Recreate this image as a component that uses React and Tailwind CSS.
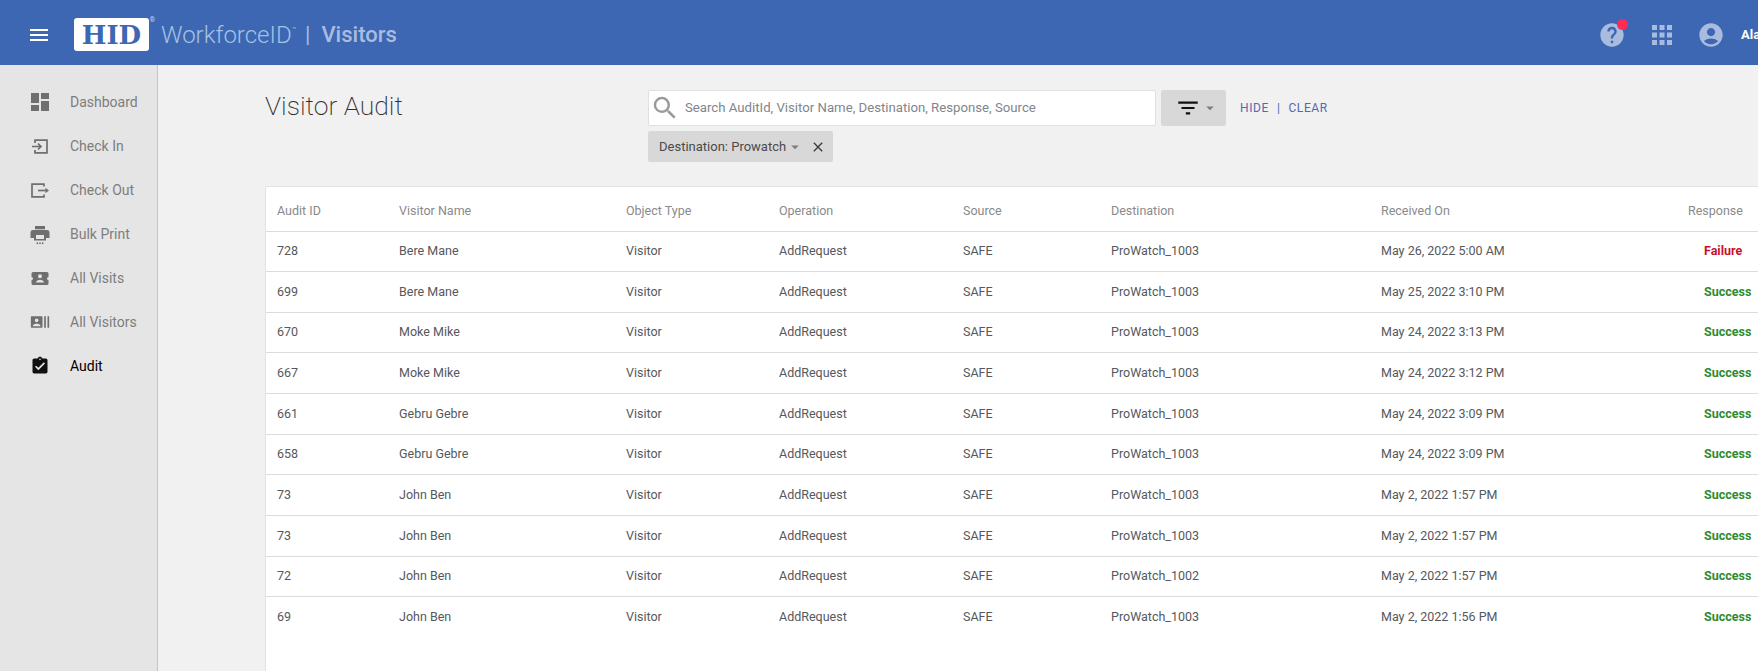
import { MdMenu, MdDashboard, MdRecentActors, MdAssignmentTurnedIn, MdHelp, MdApps, MdAccountCircle, MdFilterList, MdClose, MdArrowDropDown, MdSearch } from "react-icons/md";

function CheckInIcon({ className }) {
  return (
    <svg viewBox="0 0 24 24" className={className} fill="none" stroke="currentColor" strokeWidth="1.7">
      <path d="M4 12.500h9M10 9.500l3 3-3 3" />
      <path d="M7 9V6.200h12v12.600H7V16" />
    </svg>
  );
}

function CheckOutIcon({ className }) {
  return (
    <svg viewBox="0 0 24 24" className={className} fill="none" stroke="currentColor" strokeWidth="1.7">
      <path d="M16 8.500V6.200H4v12.600h12v-2.300" />
      <path d="M10 12.500h8" />
      <path d="M17.500 9.800l3.500 2.700-3.500 2.700z" fill="currentColor" stroke="none" />
    </svg>
  );
}

function PrintIcon({ className }) {
  return (
    <svg viewBox="0 0 24 24" className={className} fill="currentColor">
      <path d="M7 4h10v3.300H7z" />
      <path fillRule="evenodd" d="M5 8h14a2.500 2.500 0 0 1 2.500 2.500V16H18v2.500H6V16H2.500v-5.500A2.500 2.500 0 0 1 5 8zm3 5v4h8v-4z" />
      <rect x="8.500" y="20.500" width="1.600" height="1.600" />
      <rect x="11.200" y="20.500" width="1.600" height="1.600" />
      <rect x="13.900" y="20.500" width="1.600" height="1.600" />
    </svg>
  );
}

function VisitsIcon({ className }) {
  return (
    <svg viewBox="0 0 24 24" className={className} fill="currentColor">
      <path
        fillRule="evenodd"
        d="M5 6h14a1.500 1.500 0 0 1 1.500 1.500V11a1.500 1.500 0 0 0 0 3v3.500A1.500 1.500 0 0 1 19 19H5a1.500 1.500 0 0 1-1.500-1.500V14a1.500 1.500 0 0 0 0-3V7.500A1.500 1.500 0 0 1 5 6zm7 2.300a2 2 0 1 0 0 4 2 2 0 0 0 0-4zM8 16.500h8c0-1.700-2.700-2.700-4-2.700s-4 1-4 2.700z"
      />
    </svg>
  );
}

const navItems = [
  { label: "Dashboard", icon: MdDashboard, size: "ml-[28px] mr-[18px] h-[24px] w-[24px]" },
  { label: "Check In", icon: CheckInIcon, size: "ml-[28px] mr-[18px] h-[24px] w-[24px]" },
  { label: "Check Out", icon: CheckOutIcon, size: "ml-[28px] mr-[18px] h-[24px] w-[24px]" },
  { label: "Bulk Print", icon: PrintIcon, size: "ml-[28px] mr-[18px] h-[24px] w-[24px]" },
  { label: "All Visits", icon: VisitsIcon, size: "ml-[28px] mr-[18px] h-[24px] w-[24px]" },
  { label: "All Visitors", icon: MdRecentActors, size: "ml-[30px] mr-[20px] h-[20px] w-[20px]" },
  { label: "Audit", icon: MdAssignmentTurnedIn, size: "ml-[30px] mr-[20px] h-[20px] w-[20px]", active: true },
];

const rows = [
  ["728", "Bere Mane", "ProWatch_1003", "May 26, 2022 5:00 AM", "Failure"],
  ["699", "Bere Mane", "ProWatch_1003", "May 25, 2022 3:10 PM", "Success"],
  ["670", "Moke Mike", "ProWatch_1003", "May 24, 2022 3:13 PM", "Success"],
  ["667", "Moke Mike", "ProWatch_1003", "May 24, 2022 3:12 PM", "Success"],
  ["661", "Gebru Gebre", "ProWatch_1003", "May 24, 2022 3:09 PM", "Success"],
  ["658", "Gebru Gebre", "ProWatch_1003", "May 24, 2022 3:09 PM", "Success"],
  ["73", "John Ben", "ProWatch_1003", "May 2, 2022 1:57 PM", "Success"],
  ["73", "John Ben", "ProWatch_1003", "May 2, 2022 1:57 PM", "Success"],
  ["72", "John Ben", "ProWatch_1002", "May 2, 2022 1:57 PM", "Success"],
  ["69", "John Ben", "ProWatch_1003", "May 2, 2022 1:56 PM", "Success"],
];

const columns = [
  { label: "Audit ID", width: "w-[133px]" },
  { label: "Visitor Name", width: "w-[227px]" },
  { label: "Object Type", width: "w-[153px]" },
  { label: "Operation", width: "w-[184px]" },
  { label: "Source", width: "w-[148px]" },
  { label: "Destination", width: "w-[270px]" },
  { label: "Received On", width: "w-[307px]" },
  { label: "Response", width: "w-[150px]" },
];

export default function App() {
  return (
    <div className="h-screen w-screen overflow-hidden bg-[#f1f1f1] font-['Roboto',sans-serif]">
      <header className="flex h-[65px] items-center overflow-hidden bg-[#3d67b2] pt-[4px]">
        <MdMenu className="ml-[27px] h-6 w-6 text-white" />
        <div className="relative ml-[23px] flex h-[33px] w-[75px] items-center justify-center rounded-[3px] bg-white">
          <span className="font-['DejaVu_Serif',serif] text-[26px] leading-none font-bold text-[#3d67b2]">HID</span>
          <span className="absolute top-[-1px] right-[-6px] text-[7px] leading-none text-[#c5d3ea]">®</span>
        </div>
        <span className="ml-[12px] text-[24px] font-light text-[#a3c2e4]">WorkforceID</span>
        <span className="mb-2 self-center text-[7px] text-[#a3c2e4]">™</span>
        <span className="ml-[9px] text-[22px] text-[#a9bcdf]">|</span>
        <span className="ml-[11px] text-[22px] font-medium text-[#a9bcdf]">Visitors</span>
        <div className="relative ml-auto mr-[-12px] flex items-center">
          <div className="relative">
            <MdHelp className="h-[28px] w-[28px] text-[#a9bcdf]" />
            <span className="absolute top-[-2px] right-[-2px] h-[11px] w-[11px] rounded-full bg-[#ff2a55]" />
          </div>
          <MdApps className="ml-[21px] h-[30px] w-[30px] text-[#a9bcdf]" />
          <MdAccountCircle className="ml-[20px] h-[28px] w-[28px] text-[#a9bcdf]" />
          <span className="ml-[16px] w-[29px] text-[13px] font-bold text-white">Alan</span>
        </div>
      </header>

      <div className="flex h-[606px]">
        <aside className="w-[158px] shrink-0 border-r border-[#c6c6c6] bg-[#e5e5e5] pt-[15px]">
          {navItems.map(({ label, icon: Icon, active, size }) => (
            <div key={label} className={`flex h-[44px] items-center ${active ? "text-black" : "text-[#7d7d7d]"}`}>
              <Icon className={`${size} ${active ? "text-[#111111]" : "text-[#6f6f6f]"}`} />
              <span className="text-[14px]">{label}</span>
            </div>
          ))}
        </aside>

        <main className="min-w-0 flex-1 pl-[107px]">
          <div className="flex h-[121px] pt-[25px]">
            <h1 className="w-[383px] shrink-0 text-[26.500px] leading-[32px] font-extralight text-[#2f2f2f]">Visitor Audit</h1>
            <div>
              <div className="flex">
                <div className="flex h-[36px] w-[508px] items-center rounded-[2px] border border-[#e0e0e0] bg-white">
                  <MdSearch className="ml-[1px] h-[30px] w-[30px] text-[#9a9a9a]" />
                  <span className="ml-[5px] text-[13.200px] text-[#80868c]">Search AuditId, Visitor Name, Destination, Response, Source</span>
                </div>
                <div className="ml-[5px] flex h-[36px] w-[65px] items-center rounded-[2px] bg-[#d8d8d8] pl-[14px]">
                  <MdFilterList className="h-[26px] w-[26px] text-[#111111]" />
                  <MdArrowDropDown className="h-[18px] w-[18px] text-[#7d7d7d]" />
                </div>
                <div className="ml-[14px] flex h-[36px] items-center text-[12px] tracking-[0.6px] text-[#5568ad]">
                  <span>HIDE</span>
                  <span className="mx-[8px]">|</span>
                  <span>CLEAR</span>
                </div>
              </div>
              <div className="mt-[5px] flex h-[31px] w-[185px] items-center rounded-[2px] bg-[#d8d8d8] pl-[11px] text-[13px] text-[#4a4a4a]">
                <span>Destination: Prowatch</span>
                <MdArrowDropDown className="h-[18px] w-[18px] text-[#7d7d7d]" />
                <MdClose className="ml-[6px] h-[16px] w-[16px] text-[#3a3a3a]" />
              </div>
            </div>
          </div>

          <div className="h-[500px] w-[1580px] rounded-t-[2px] border border-[#e2e2e2] bg-white">
            <table className="w-[1572px] table-fixed border-collapse text-left text-[12.500px]">
              <colgroup>
                {columns.map((c) => (
                  <col key={c.label} className={c.width} />
                ))}
              </colgroup>
              <thead>
                <tr className="h-[44px] border-b border-[#dcdcdc]">
                  {columns.map((c, i) => (
                    <th key={c.label} className={`pt-[5px] font-normal text-[#8a8a8a] ${i === 0 ? "pl-[11px]" : ""}`}>
                      {c.label}
                    </th>
                  ))}
                </tr>
              </thead>
              <tbody className="text-[#55585c]">
                {rows.map((r, idx) => (
                  <tr key={idx} className="h-[40.670px] border-b border-[#dcdcdc] last:border-b-0">
                    <td className="pl-[11px]">{r[0]}</td>
                    <td>{r[1]}</td>
                    <td>Visitor</td>
                    <td>AddRequest</td>
                    <td>SAFE</td>
                    <td>{r[2]}</td>
                    <td>{r[3]}</td>
                    <td className={`pl-[16px] font-bold ${r[4] === "Failure" ? "text-[#c8102e]" : "text-[#2e8b2e]"}`}>{r[4]}</td>
                  </tr>
                ))}
              </tbody>
            </table>
          </div>
        </main>
      </div>
    </div>
  );
}
